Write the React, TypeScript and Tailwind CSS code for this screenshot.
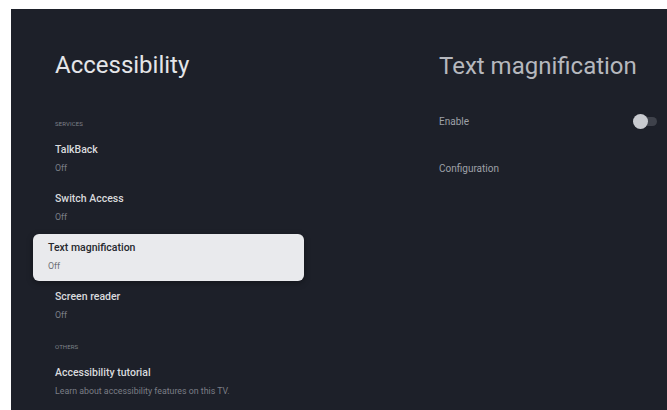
type Item = { title: string; subtitle: string; focused?: boolean }

const services: Item[] = [
  { title: 'TalkBack', subtitle: 'Off' },
  { title: 'Switch Access', subtitle: 'Off' },
  { title: 'Text magnification', subtitle: 'Off', focused: true },
  { title: 'Screen reader', subtitle: 'Off' },
]

const others: Item[] = [
  { title: 'Accessibility tutorial', subtitle: 'Learn about accessibility features on this TV.' },
]

function SectionLabel({ children }: { children: string }) {
  return (
    <div className="px-[44px] text-[6px] leading-none uppercase tracking-[0.02em] text-[#7f828a]">
      {children}
    </div>
  )
}

function Row({ item }: { item: Item }) {
  if (item.focused) {
    return (
      <div className="h-[47px] mx-[22px] px-[15px] pt-[9px] rounded-[6px] bg-[#e9eaed] shadow-[0_2px_6px_rgba(0,0,0,0.35)]">
        <div className="text-[10.5px] leading-none font-medium text-[#26282d]">{item.title}</div>
        <div className="mt-[8px] text-[8.8px] leading-none text-[#6d7077]">{item.subtitle}</div>
      </div>
    )
  }
  return (
    <div className="h-[47px] mx-[29px] px-[15px] pt-[9px]">
      <div className="text-[10.5px] leading-none font-medium text-[#d9dadd]">{item.title}</div>
      <div className="mt-[8px] text-[8.8px] leading-none text-[#7b7e86]">{item.subtitle}</div>
    </div>
  )
}

function Toggle() {
  return (
    <div className="relative w-[24px] h-[15px] flex items-center">
      <div className="w-full h-[9px] rounded-full bg-[#3f424b]" />
      <div className="absolute left-0 top-0 w-[15px] h-[15px] rounded-full bg-[#c9cbd0]" />
    </div>
  )
}

export default function App() {
  return (
    <div
      className="w-[667px] h-[410px] bg-white pt-[9px] pl-[11px] overflow-hidden"
      style={{ fontFamily: 'Roboto, "Noto Sans", sans-serif' }}
    >
      <div className="flex h-full bg-[#1d2029]">
        {/* menu column */}
        <div className="w-[315px] shrink-0">
          <h1 className="mt-[44px] px-[44px] text-[24px] leading-none text-[#e4e5e8]">Accessibility</h1>
          <div className="mt-[44px]">
            <SectionLabel>Services</SectionLabel>
          </div>
          <div className="mt-[9px] flex flex-col gap-[2px]">
            {services.map((s) => (
              <Row key={s.title} item={s} />
            ))}
          </div>
          <div className="mt-[14px]">
            <SectionLabel>Others</SectionLabel>
          </div>
          <div className="mt-[9px] flex flex-col gap-[2px]">
            {others.map((s) => (
              <Row key={s.title} item={s} />
            ))}
          </div>
        </div>

        {/* detail pane */}
        <div className="flex-1 pl-[113px] pr-[10px]">
          <h2 className="mt-[45px] text-[24px] leading-none text-[#b6b8be]">Text magnification</h2>
          <div className="mt-[36px] flex items-center justify-between">
            <span className="text-[10px] leading-none text-[#9ea1a8]">Enable</span>
            <Toggle />
          </div>
          <div className="mt-[35px] text-[10px] leading-none text-[#9ea1a8]">Configuration</div>
        </div>
      </div>
    </div>
  )
}
